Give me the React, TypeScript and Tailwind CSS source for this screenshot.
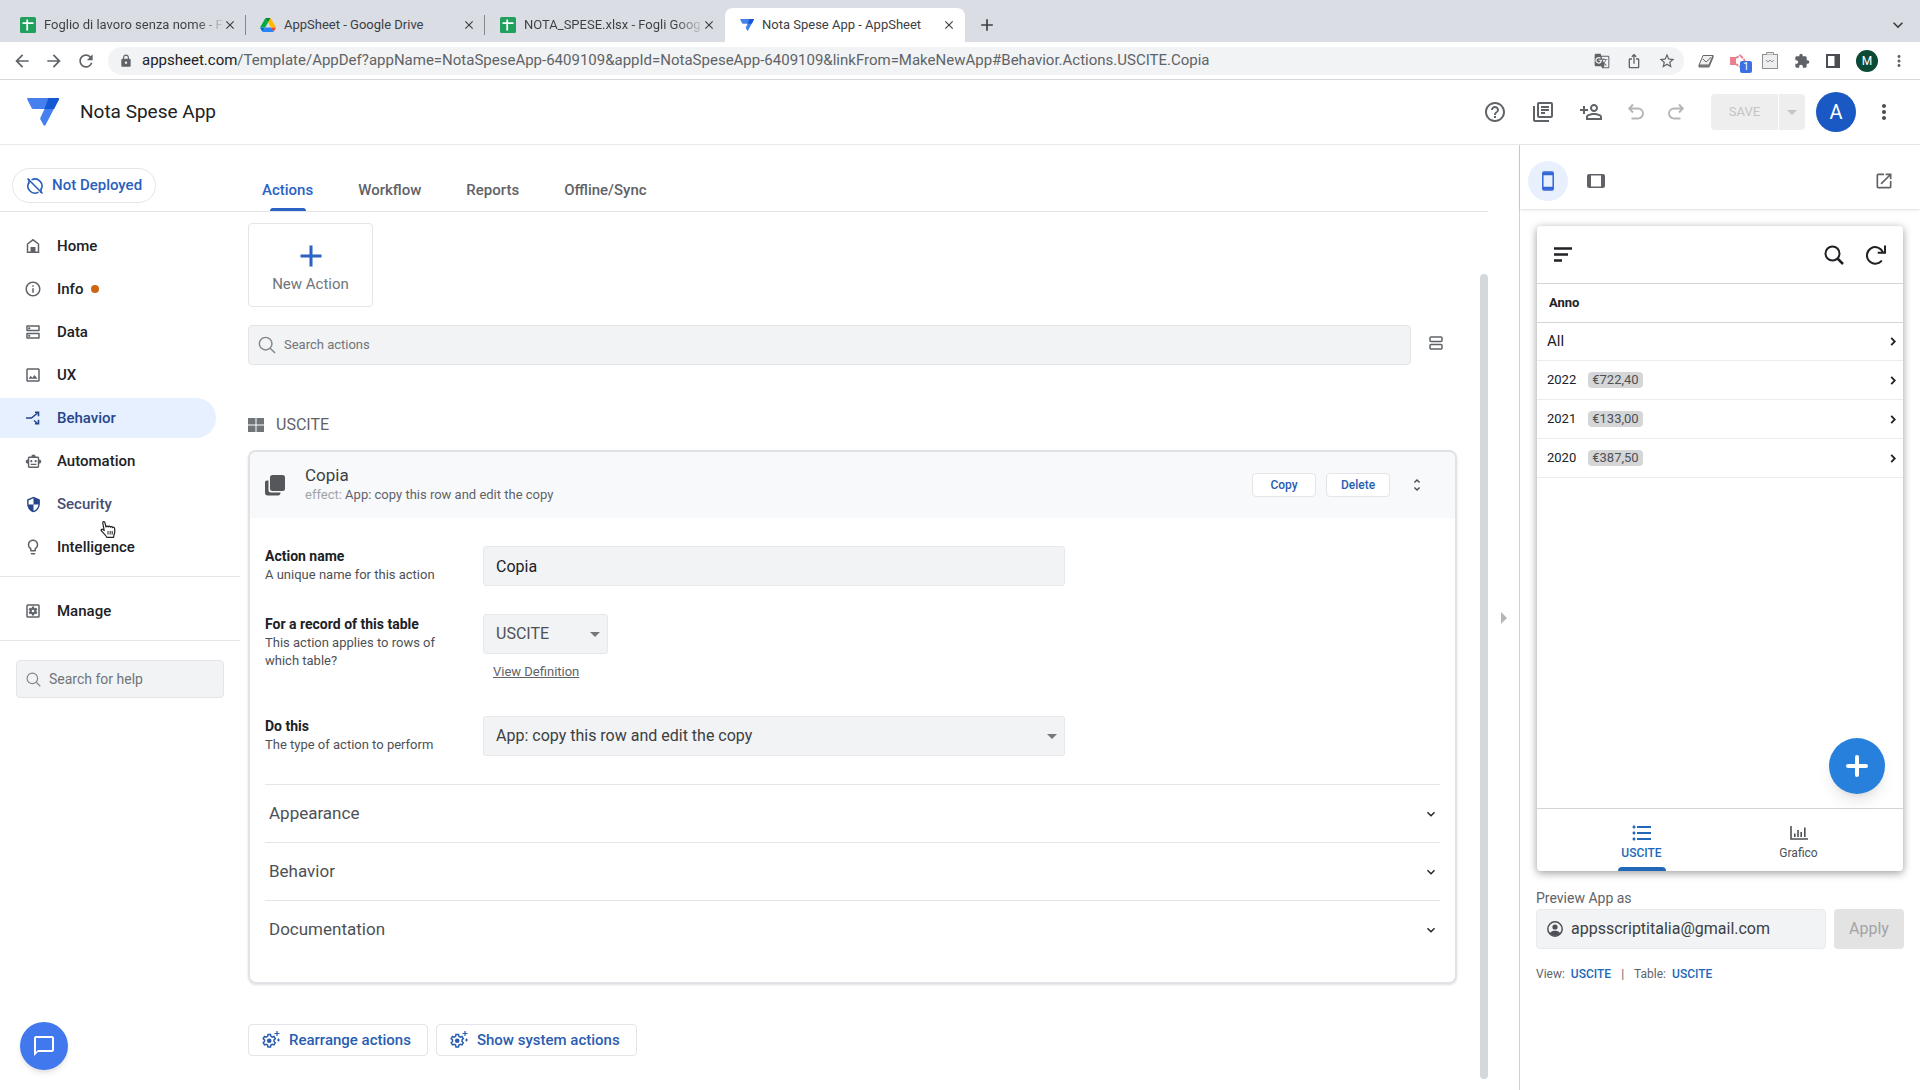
import type { ReactNode } from "react";
import {
  MdAdd,
  MdArrowBack,
  MdArrowForward,
  MdChatBubbleOutline,
  MdClose,
  MdExtension,
  MdFormatListBulleted,
  MdGTranslate,
  MdIosShare,
  MdKeyboardArrowDown,
  MdLock,
  MdMoreVert,
  MdOpenInNew,
  MdOutlineDns,
  MdOutlineHelpOutline,
  MdOutlineImage,
  MdOutlineInfo,
  MdOutlineLibraryBooks,
  MdOutlineLightbulb,
  MdOutlinePersonAddAlt,
  MdOutlineSettingsApplications,
  MdOutlineSmartToy,
  MdRefresh,
  MdSecurity,
  MdStarBorder,
  MdUnfoldMore,
} from "react-icons/md";

function SheetsIcon() {
  return (
    <svg viewBox="0 0 16 16" className="size-4 shrink-0">
      <rect width="16" height="16" rx="1.5" fill="#1fa15d" />
      <path d="M7.2 2.5v11M2.5 6.2h11" stroke="#fff" strokeWidth="1.8" />
    </svg>
  );
}

function DriveIcon() {
  return (
    <svg viewBox="0 0 87 78" className="h-[14px] w-4 shrink-0">
      <path d="M6.6 66.9l3.9 6.6c.8 1.4 2 2.5 3.3 3.3l13.7-23.8H0c0 1.6.4 3.1 1.2 4.5z" fill="#0066da" />
      <path d="M43.7 25L29.9 1.2c-1.3.8-2.5 1.9-3.3 3.3L1.2 48.5C.4 49.9 0 51.5 0 53h27.5z" fill="#00ac47" />
      <path d="M73.5 76.8c1.4-.8 2.5-1.9 3.3-3.3l9.3-16c.8-1.4 1.2-3 1.2-4.5H59.8l5.9 11.5z" fill="#ea4335" />
      <path d="M43.7 25L57.4 1.2C56.1.4 54.5 0 52.9 0H34.4c-1.6 0-3.1.4-4.5 1.2z" fill="#00832d" />
      <path d="M59.8 53H27.5L13.8 76.8c1.3.8 2.9 1.2 4.5 1.2h50.8c1.6 0 3.1-.4 4.5-1.2z" fill="#2684fc" />
      <path d="M73.4 26.5L60.7 4.5c-.8-1.4-1.9-2.5-3.3-3.3L43.7 25l16.1 28h27.5c0-1.6-.4-3.1-1.2-4.5z" fill="#ffba00" />
    </svg>
  );
}

function AppSheetIcon({ className }: { className: string }) {
  return (
    <svg viewBox="0 0 32 28" className={className}>
      <path d="M1 0h30c1 0 1.300.8.9 1.600L18.500 27c-.5 1-1.500 1-2 0l-3-5.500c-.4-.8-.4-1.200 0-2L17.500 11H6.500C5.500 11 5 10.700 4.600 10L.3 1.500C-.1.700.200 0 1 0z" fill="#4580ee" />
      <path d="M21.500 0H31c1 0 1.300.8.9 1.600L27 11h-9.500z" fill="#1458d3" />
    </svg>
  );
}

function HomeIcon() {
  return (
    <svg viewBox="0 0 16 16" className="size-4">
      <path d="M2.500 14.200V6L8 1.800 13.500 6v8.200z" fill="none" stroke="currentColor" strokeWidth="1.500" />
      <path d="M5.500 14V9h5v5z" fill="currentColor" />
    </svg>
  );
}

function BranchIcon() {
  return (
    <svg viewBox="0 0 16 16" className="size-4" fill="none" stroke="currentColor" strokeWidth="1.600">
      <path d="M1 8h5.500l6-5M9 10.500l3.500 3" />
      <path d="M10 2.300h3.500v4M10 13.700h3.500v-4" />
    </svg>
  );
}

function UndoIcon({ className = "" }: { className?: string }) {
  return (
    <svg viewBox="0 0 18 18" className={"size-[18px] " + className} fill="none" stroke="currentColor" strokeWidth="1.900">
      <path d="M6 1.500L2.200 5.500 6 9.500M2.500 5.500h8.500a5 5 0 0 1 0 10H4.500" />
    </svg>
  );
}

function ThinSearch({ className }: { className: string }) {
  return (
    <svg viewBox="0 0 20 20" className={className} fill="none" stroke="currentColor" strokeWidth="1.600">
      <circle cx="8.500" cy="8.500" r="7" />
      <path d="M13.500 13.500l5.500 5.500" />
    </svg>
  );
}

function NotDeployedIcon() {
  return (
    <svg viewBox="0 0 18 18" className="size-[18px]" fill="none" stroke="currentColor" strokeWidth="1.600">
      <path d="M1.500 1.500l15 15" />
      <path d="M5.600 2.900a7 7 0 0 1 9.500 9.500M12.500 15.100a7 7 0 0 1-9.600-9.600" />
      <path d="M3 2v4.500M15 16v-4.500" />
    </svg>
  );
}

function ViewRowsIcon() {
  return (
    <svg viewBox="0 0 14 14" className="size-[14px] text-[#5f6368]" fill="none" stroke="currentColor" strokeWidth="1.500">
      <rect x="1" y="1" width="12" height="4.500" rx="1" />
      <rect x="1" y="8.500" width="12" height="4.500" rx="1" />
    </svg>
  );
}

function CopyIcon() {
  return (
    <svg viewBox="0 0 20 21" className="h-[21px] w-5" fill="#55575b">
      <rect x="5" y="0" width="15" height="16" rx="2.500" />
      <path d="M0 7.500C0 6.300.8 5.500 2 5.500h1.500V15c0 1.700.8 2.500 2.500 2.500h9.500v.5c0 1.500-1 2.500-2.500 2.500H2.500C1 20.500 0 19.500 0 18z" />
    </svg>
  );
}

function GearSparkIcon() {
  return (
    <svg viewBox="0 0 18 18" className="size-[18px]" fill="none" stroke="currentColor">
      <path
        d="M6 3.500h2.500l.4 1.800 1.400.8 1.700-.6 1.300 2.200-1.300 1.200v1.600l1.300 1.200-1.300 2.200-1.700-.6-1.400.8-.4 1.800H6l-.4-1.800-1.400-.8-1.700.6-1.300-2.200 1.300-1.200V8.900L1.200 7.700l1.300-2.200 1.700.6 1.400-.8z"
        strokeWidth="1.500"
      />
      <circle cx="7.200" cy="9.700" r="2.300" fill="currentColor" stroke="none" />
      <path d="M15 0v5M12.500 2.500h5" strokeWidth="1.200" />
      <path d="M16.500 7.500v3M15 9h3" strokeWidth="1" />
    </svg>
  );
}

function BarChartIcon() {
  return (
    <svg viewBox="0 0 18 14" className="h-[14px] w-[18px]" fill="none" stroke="currentColor" strokeWidth="1.600">
      <path d="M1 0v13h17" />
      <path d="M4.800 11V7.500M8 11V4M11.200 11V6M14.800 11V1.500" />
    </svg>
  );
}

function ReloadIcon() {
  return (
    <svg viewBox="0 0 20 20" className="size-5" fill="none" stroke="currentColor" strokeWidth="2">
      <path d="M17 7.500A8.300 8.300 0 1 0 15.800 15.500" />
      <path d="M19 .5v7.300h-7.300" />
    </svg>
  );
}

function MenuIcon() {
  return (
    <svg viewBox="0 0 18 15" className="h-[15px] w-[18px]" stroke="currentColor" strokeWidth="2.400">
      <path d="M0 1.500h18M0 7.500h14M0 13.500h8" />
    </svg>
  );
}

function PhoneIcon() {
  return (
    <svg viewBox="0 0 12 20" className="h-5 w-3" fill="none" stroke="currentColor" strokeWidth="1.500">
      <rect x=".8" y="1" width="10.400" height="18" rx="1.200" />
      <path d="M1 2.700h10M1 17.300h10" strokeWidth="3" />
    </svg>
  );
}

function TabletIcon() {
  return (
    <svg viewBox="0 0 18 14" className="h-[14px] w-[18px]" fill="none" stroke="currentColor" strokeWidth="1.600">
      <rect x=".8" y=".8" width="16.400" height="12.400" rx="1.200" />
      <path d="M2.500 1v12M15.500 1v12" strokeWidth="3" />
    </svg>
  );
}

function AccountIcon() {
  return (
    <svg viewBox="0 0 16 16" className="size-4 shrink-0 text-[#4d5156]" fill="currentColor">
      <circle cx="8" cy="8" r="7.200" fill="none" stroke="currentColor" strokeWidth="1.500" />
      <circle cx="8" cy="6" r="2.600" />
      <path d="M2.800 12.200C4 10.300 6 9.800 8 9.800s4 .5 5.200 2.400A7 7 0 0 1 8 15a7 7 0 0 1-5.200-2.800z" />
    </svg>
  );
}

function HandCursor() {
  return (
    <svg viewBox="0 0 16 17" className="h-[17px] w-4" fill="#fff" stroke="#222" strokeWidth="1.200" strokeLinejoin="round">
      <path d="M4.200 9.500L2.800 2.200C2.500.4 4.600.1 5 1.800l1 4.200c0-1.200 2-1.300 2.200 0 .3-1.200 2-1 2.200.2.400-1 2-.7 2.200.4.500-.8 2-.4 2 .8l.2 3.200c0 1.500-1 2.500-1.200 5.700H6.800c-1.100-2.600-4-4.500-5.500-6.600-.6-1 .6-2 1.600-1.300z" />
      <path d="M8 10v3.500M10.200 10v3.500M12.200 10v3.500" strokeWidth="1" />
    </svg>
  );
}

const browserTabs = [
  { title: "Foglio di lavoro senza nome - F", icon: <SheetsIcon />, active: false },
  { title: "AppSheet - Google Drive", icon: <DriveIcon />, active: false },
  { title: "NOTA_SPESE.xlsx - Fogli Goog", icon: <SheetsIcon />, active: false },
  { title: "Nota Spese App - AppSheet", icon: <AppSheetIcon className="h-3 w-[14px] shrink-0" />, active: true },
];

function BrowserChrome() {
  return (
    <div>
      <div className="flex h-[42px] items-end bg-[#dadde3] pl-[5px]">
        {browserTabs.map((tab, i) => (
          <div
            key={tab.title}
            className={
              "flex h-[34px] w-60 items-center pr-[9px] pl-[15px] " +
              (tab.active ? "rounded-t-lg bg-white" : "")
            }
          >
            {tab.icon}
            <span
              className={
                "ml-2 flex-1 text-[13px] whitespace-nowrap " +
                (tab.active || i === 1
                  ? "text-[#3c4043]"
                  : "bg-linear-to-r from-[#3c4043] from-85% to-[#3c4043]/10 bg-clip-text text-transparent")
              }
            >
              {tab.title}
            </span>
            <button aria-label="Close tab" className="text-[#3c4043]">
              <MdClose size={14} />
            </button>
            {i < 2 && <span className="-mr-[9px] ml-2 h-5 w-px bg-[#84878c]" />}
          </div>
        ))}
        <button aria-label="New tab" className="ml-3 flex h-[34px] items-center text-[#3c4043]">
          <MdAdd size={20} />
        </button>
        <button aria-label="Search tabs" className="mr-3 ml-auto flex h-[34px] items-center text-[#3c4043]">
          <MdKeyboardArrowDown size={20} />
        </button>
      </div>
      <div className="flex h-[38px] items-center border-b border-[#d5d7da] px-3 text-[#5f6368]">
        <div className="flex w-24 items-center gap-3">
          <button aria-label="Back">
            <MdArrowBack size={20} />
          </button>
          <button aria-label="Forward">
            <MdArrowForward size={20} />
          </button>
          <button aria-label="Reload">
            <MdRefresh size={20} />
          </button>
        </div>
        <div className="flex h-7 flex-1 items-center rounded-full bg-[#f1f3f4] pr-2 pl-[11px]">
          <MdLock size={14} />
          <p className="ml-[9px] flex-1 text-[15px] whitespace-nowrap">
            <span className="text-[#202124]">appsheet.com</span>
            /Template/AppDef?appName=NotaSpeseApp-6409109&amp;appId=NotaSpeseApp-6409109&amp;linkFrom=MakeNewApp#Behavior.Actions.USCITE.Copia
          </p>
          <div className="flex items-center gap-4">
            <MdGTranslate size={16} />
            <MdIosShare size={16} />
            <MdStarBorder size={18} />
          </div>
        </div>
        <div className="ml-[14px] flex items-center gap-4">
          <svg viewBox="0 0 16 14" className="h-[14px] w-4" fill="#eee" stroke="#666">
            <path d="M1 11v2h10l4-9.500V1.500z" fill="#888" />
            <path d="M5 1.500h10l-4 9.500H1z" />
            <path d="M5 5l3 3 5-4.500" fill="none" />
          </svg>
          <span className="relative">
            <svg viewBox="0 0 16 16" className="size-4" fill="none" stroke="#ec7f8e" strokeWidth="2">
              <rect x="1" y="5" width="4" height="6" fill="#ec7f8e" />
              <path d="M6 5l5-3M6 11l4 3M11 3l4 5" strokeDasharray="3 1" />
            </svg>
            <span className="absolute top-2 left-[10px] flex h-3 w-3 items-center justify-center rounded-xs bg-[#3c6fe4] text-[10px] leading-none text-white">
              1
            </span>
          </span>
          <svg viewBox="0 0 16 17" className="h-[17px] w-4" fill="#eee" stroke="#8c8f94">
            <rect x=".5" y="2.500" width="15" height="14" />
            <path d="M4.500 2.500v-2h7v2M4 8l2 2 2-2 2 2 2-2" />
          </svg>
          <MdExtension size={16} />
          <svg viewBox="0 0 14 14" className="size-[14px]" fill="none" stroke="#4a4d51" strokeWidth="2">
            <rect x="1" y="1" width="12" height="12" />
            <path d="M10.500 1v12" strokeWidth="4" />
          </svg>
          <span className="flex size-[22px] items-center justify-center rounded-full bg-[#0b4a35] text-xs text-white">
            M
          </span>
          <MdMoreVert size={18} className="-ml-1" />
        </div>
      </div>
    </div>
  );
}

function AppHeader() {
  return (
    <header className="flex h-[65px] items-center border-b border-[#e8eaed] pr-6 pl-[27px] text-[#5f6368]">
      <AppSheetIcon className="h-7 w-8" />
      <h1 className="ml-[21px] flex-1 text-[19px] text-[#202124]">Nota Spese App</h1>
      <div className="flex items-center gap-6">
        <button aria-label="Help">
          <MdOutlineHelpOutline size={24} />
        </button>
        <button aria-label="Library">
          <MdOutlineLibraryBooks size={24} />
        </button>
        <button aria-label="Share" className="-scale-x-100">
          <MdOutlinePersonAddAlt size={24} />
        </button>
        <div className="flex gap-[22px] text-[#b4b6b9]">
          <button aria-label="Undo">
            <UndoIcon />
          </button>
          <button aria-label="Redo">
            <UndoIcon className="-scale-x-100" />
          </button>
        </div>
      </div>
      <div className="ml-[26px] flex h-9 overflow-hidden rounded bg-[#eeeeee] text-[#c4c4c4]">
        <button className="w-[68px] border-r border-white text-[13px]">SAVE</button>
        <button aria-label="Save options" className="flex w-[26px] items-center justify-center">
          <span className="border-x-5 border-t-5 border-x-transparent border-t-current" />
        </button>
      </div>
      <button className="mr-4 ml-[11px] size-10 rounded-full bg-[#1a58c4] text-xl text-white">A</button>
      <button aria-label="More" className="text-[#4a4d51]">
        <MdMoreVert size={24} />
      </button>
    </header>
  );
}

type NavItem = { label: string; icon: ReactNode; tone?: string; dot?: boolean };

const navItems: NavItem[] = [
  { label: "Home", icon: <HomeIcon /> },
  { label: "Info", icon: <MdOutlineInfo size={18} />, dot: true },
  { label: "Data", icon: <MdOutlineDns size={18} /> },
  { label: "UX", icon: <MdOutlineImage size={18} /> },
  { label: "Behavior", icon: <BranchIcon />, tone: "bg-[#e6f0fe] text-[#26468c]" },
  { label: "Automation", icon: <MdOutlineSmartToy size={17} /> },
  { label: "Security", icon: <MdSecurity size={17} />, tone: "text-[#474d75]" },
  { label: "Intelligence", icon: <MdOutlineLightbulb size={18} /> },
];

function NavLink({ item }: { item: NavItem }) {
  return (
    <a
      href={"#" + item.label}
      className={
        "mr-6 flex h-10 items-center rounded-r-full pl-6 text-[15px] font-medium " +
        (item.tone ?? "text-[#202124]")
      }
    >
      <span
        className={
          "flex w-[18px] justify-center " + (item.tone ? "text-[#26468c]" : "text-[#5f6368]")
        }
      >
        {item.icon}
      </span>
      <span className="ml-[15px]">{item.label}</span>
      {item.dot && <span className="ml-2 size-2 rounded-full bg-[#cc6612]" />}
    </a>
  );
}

function Sidebar() {
  return (
    <aside className="flex w-60 shrink-0 flex-col">
      <div className="flex h-[67px] items-end border-b border-[#e3e5e8] pb-2 pl-3">
        <button className="flex h-[35px] items-center gap-2 rounded-full border border-[#e3e5e8] px-[13px] text-[15px] font-medium text-[#2a5fbd]">
          <NotDeployedIcon />
          Not Deployed
        </button>
      </div>
      <div className="relative">
        <nav className="flex flex-col gap-[3px] pt-[14px] pb-[9px]">
          {navItems.map((item) => (
            <NavLink key={item.label} item={item} />
          ))}
        </nav>
        <span className="absolute top-[309px] left-[100px]">
          <HandCursor />
        </span>
      </div>
      <div className="border-y border-[#e3e5e8] pt-[14px] pb-[9px]">
        <NavLink item={{ label: "Manage", icon: <MdOutlineSettingsApplications size={18} /> }} />
      </div>
      <label className="mx-4 mt-[19px] flex h-[38px] items-center gap-2 rounded border border-[#e3e5e8] bg-[#f1f3f4] px-[9px] text-[#80868b]">
        <ThinSearch className="size-[15px] shrink-0" />
        <input
          type="search"
          aria-label="Search for help"
          placeholder="Search for help"
          className="min-w-0 flex-1 text-sm outline-none placeholder:text-[#70757a]"
        />
      </label>
      <button
        aria-label="Chat"
        className="mt-auto mb-5 ml-5 flex size-12 items-center justify-center rounded-full bg-[#4178ee] text-white shadow-md"
      >
        <MdChatBubbleOutline size={24} />
      </button>
    </aside>
  );
}

function Caret() {
  return (
    <span className="pointer-events-none absolute top-[18px] right-2 border-x-5 border-t-5 border-x-transparent border-t-[#777]" />
  );
}

const fieldBox =
  "h-10 w-full appearance-none rounded-[3px] border border-[#e6e8eb] bg-[#f1f3f4] px-3 text-base outline-none";

function FieldRow({ id, label, hint, children }: { id: string; label: string; hint: string; children: ReactNode }) {
  return (
    <div className="flex">
      <div className="w-[218px] shrink-0">
        <label htmlFor={id} className="block text-sm leading-5 font-bold text-[#202124]">
          {label}
        </label>
        <p className="w-[180px] text-[13px] leading-[18px] text-[#4d5156]">{hint}</p>
      </div>
      <div className="max-w-[582px] flex-1">{children}</div>
    </div>
  );
}

function ActionCard() {
  return (
    <section className="mt-[13px] rounded-lg border-2 border-[#e0e2e6] pb-6 shadow">
      <div className="flex h-[66px] items-center rounded-t-md bg-[#f8f9fb] pr-[30px] pl-[15px]">
        <CopyIcon />
        <div className="ml-5 flex-1 pb-1">
          <h3 className="text-[17px] leading-6 text-[#3c4043]">Copia</h3>
          <p className="text-[13px] leading-4 text-[#5f6368]">
            <span className="text-[#a0a4a8]">effect:</span> App: copy this row and edit the copy
          </p>
        </div>
        <div className="flex gap-[10px] text-xs font-medium text-[#2a5db0]">
          <button className="h-6 w-16 rounded-sm border border-[#e3e5e8] bg-white">Copy</button>
          <button className="h-6 w-16 rounded-sm border border-[#e3e5e8] bg-white">Delete</button>
        </div>
        <button aria-label="Collapse action" className="ml-[19px] text-[#4a4d51]">
          <MdUnfoldMore size={16} />
        </button>
      </div>
      <div className="px-[15px] pt-7">
        <FieldRow id="action-name" label="Action name" hint="A unique name for this action">
          <input id="action-name" defaultValue="Copia" className={fieldBox + " text-[#202124]"} />
        </FieldRow>
        <div className="mt-7">
          <FieldRow id="table" label="For a record of this table" hint="This action applies to rows of which table?">
            <div className="relative w-[125px]">
              <select id="table" className={fieldBox + " text-[#4d5156]"}>
                <option>USCITE</option>
              </select>
              <Caret />
            </div>
            <a href="#definition" className="mt-2 ml-[10px] inline-block text-[13px] text-[#5f6368] underline">
              View Definition
            </a>
          </FieldRow>
        </div>
        <div className="mt-[33px]">
          <FieldRow id="do-this" label="Do this" hint="The type of action to perform">
            <div className="relative">
              <select id="do-this" className={fieldBox + " text-[#3c4043]"}>
                <option>App: copy this row and edit the copy</option>
              </select>
              <Caret />
            </div>
          </FieldRow>
        </div>
        <div className="mt-7">
          {["Appearance", "Behavior", "Documentation"].map((name) => (
            <button
              key={name}
              className="flex h-[58px] w-full items-center justify-between border-t border-[#e3e5e8] pr-px pl-1 text-[17px] text-[#4d5156]"
            >
              {name}
              <MdKeyboardArrowDown size={16} className="text-[#202124]" />
            </button>
          ))}
        </div>
      </div>
    </section>
  );
}

function Editor() {
  return (
    <main className="flex min-w-0 flex-1 flex-col">
      <div className="flex h-[67px] gap-px border-b border-[#e3e5e8] text-[15px] font-medium text-[#5f6368]">
        {["Actions", "Workflow", "Reports", "Offline/Sync"].map((tab, i) => (
          <button
            key={tab}
            className={"flex flex-col items-center px-[22px] " + (i === 0 ? "text-[#2a63c4]" : "")}
          >
            <span className="mt-[35px] flex-1 leading-5">{tab}</span>
            {i === 0 && <span className="h-[3px] w-9 rounded-t-full bg-[#2a63c4]" />}
          </button>
        ))}
      </div>
      <div className="flex flex-1">
        <div className="min-w-0 flex-1 pt-[11px] pr-[23px] pl-2">
          <button className="flex h-[84px] w-[125px] flex-col items-center rounded border border-[#e3e5e8] pt-[14px] text-[15px] leading-5 text-[#70757a]">
            <MdAdd size={36} className="text-[#2a63c4]" />
            New Action
          </button>
          <div className="mt-[18px] flex items-center">
            <label className="flex h-10 flex-1 items-center gap-2 rounded border border-[#e3e5e8] bg-[#f1f3f4] px-[9px] text-[#80868b]">
              <ThinSearch className="size-[18px] shrink-0" />
              <input
                type="search"
                aria-label="Search actions"
                placeholder="Search actions"
                className="min-w-0 flex-1 text-[13px] outline-none placeholder:text-[#70757a]"
              />
            </label>
            <button aria-label="Toggle view" className="mr-[14px] ml-[18px] pb-1">
              <ViewRowsIcon />
            </button>
          </div>
          <h2 className="mt-12 flex items-center gap-3 text-base leading-6 text-[#5f6368]">
            <svg viewBox="0 0 16 14" className="h-[14px] w-4" fill="#70757a">
              <path d="M0 0h7.500v6.500H0zM8.500 0H16v6.500H8.500zM0 7.500h7.500V14H0zM8.500 7.500H16V14H8.500z" />
            </svg>
            USCITE
          </h2>
          <ActionCard />
          <div className="mt-10 flex gap-2 text-[15px] font-medium text-[#2a5db0]">
            {["Rearrange actions", "Show system actions"].map((label) => (
              <button
                key={label}
                className="flex h-8 items-center gap-[9px] rounded-sm border border-[#e3e5e8] pr-4 pl-[13px]"
              >
                <GearSparkIcon />
                {label}
              </button>
            ))}
          </div>
        </div>
        <div className="flex w-2 pt-[62px] pb-[11px]">
          <div className="w-full rounded-full bg-[#d5d8db]" />
        </div>
      </div>
    </main>
  );
}

const years = [
  { year: "2022", total: "€722,40" },
  { year: "2021", total: "€133,00" },
  { year: "2020", total: "€387,50" },
];

function Chevron() {
  return (
    <svg viewBox="0 0 6 10" className="ml-auto h-[9px] w-[6px]" fill="none" stroke="currentColor" strokeWidth="2">
      <path d="M1 1l4 4-4 4" />
    </svg>
  );
}

function PhonePreview() {
  return (
    <div className="relative flex h-[645px] flex-col overflow-hidden rounded text-[#202124]">
      <div className="flex h-[58px] items-center border-b border-[#d2d4d7] px-[17px]">
        <button aria-label="Menu">
          <MenuIcon />
        </button>
        <button aria-label="Search" className="mr-[22px] ml-auto">
          <svg viewBox="0 0 20 20" className="size-5" fill="none" stroke="currentColor" strokeWidth="2">
            <circle cx="8.500" cy="8.500" r="7" />
            <path d="M13.500 13.500l5.500 5.500" strokeWidth="2.500" />
          </svg>
        </button>
        <button aria-label="Sync">
          <ReloadIcon />
        </button>
      </div>
      <h4 className="flex h-[39px] items-center border-b border-[#d2d4d7] px-3 text-[13px] font-bold">Anno</h4>
      <ul>
        <li className="border-b border-[#ebecee]">
          <button className="flex h-[37px] w-full items-center pr-[7px] pl-[10px] text-[15px]">
            All
            <Chevron />
          </button>
        </li>
        {years.map((row) => (
          <li key={row.year} className="border-b border-[#ebecee]">
            <button className="flex h-[38px] w-full items-center pr-[7px] pl-[10px] text-[13px]">
              {row.year}
              <span className="ml-3 rounded-sm bg-[#d5d6d8] px-1 leading-4 text-[#4d5156]">{row.total}</span>
              <Chevron />
            </button>
          </li>
        ))}
      </ul>
      <button
        aria-label="Add"
        className="absolute right-[18px] bottom-[77px] flex size-14 items-center justify-center rounded-full bg-[#2780dc] text-white shadow-lg"
      >
        <svg viewBox="0 0 22 22" className="size-[22px]" stroke="currentColor" strokeWidth="4" strokeLinecap="round">
          <path d="M11 2v18M2 11h18" />
        </svg>
      </button>
      <div className="mt-auto flex h-[63px] border-t border-[#d2d4d7] px-[26px] text-xs">
        <button className="flex flex-1 flex-col items-center pt-3 font-medium text-[#2368b8]">
          <MdFormatListBulleted size={24} />
          <span className="flex-1">USCITE</span>
          <span className="h-1 w-12 rounded-t-sm bg-[#2368b8]" />
        </button>
        <button className="flex flex-1 flex-col items-center gap-[5px] pt-[17px] text-[#4d5156]">
          <BarChartIcon />
          Grafico
        </button>
      </div>
    </div>
  );
}

function PreviewPanel() {
  return (
    <aside className="w-[401px] shrink-0 border-l border-[#cfd1d4]">
      <div className="flex h-16 items-center pt-2 pr-[26px] pl-2 text-[#5f6368] shadow">
        <button
          aria-label="Phone view"
          className="flex size-10 items-center justify-center rounded-full bg-[#e8f0fe] text-[#3367d6]"
        >
          <PhoneIcon />
        </button>
        <button aria-label="Tablet view" className="ml-[19px]">
          <TabletIcon />
        </button>
        <button aria-label="Open in new window" className="ml-auto">
          <MdOpenInNew size={20} />
        </button>
      </div>
      <div className="px-4 pt-[17px]">
        <div className="mx-px rounded bg-white shadow-[0_2px_8px_rgba(0,0,0,0.4)]">
          <PhonePreview />
        </div>
        <label htmlFor="preview-as" className="mt-[17px] block text-sm leading-5 text-[#5f6368]">
          Preview App as
        </label>
        <div className="mt-px flex gap-2">
          <div className="flex h-10 flex-1 items-center gap-2 rounded border border-[#e8eaed] bg-[#f1f3f4] px-[10px]">
            <AccountIcon />
            <input
              id="preview-as"
              defaultValue="appsscriptitalia@gmail.com"
              className="min-w-0 flex-1 text-base text-[#3c4043] outline-none"
            />
          </div>
          <button className="h-10 w-[70px] rounded bg-[#e3e3e3] text-base text-[#a2a4a6]">Apply</button>
        </div>
        <p className="mt-[15px] flex gap-[6px] text-xs leading-5 text-[#5f6368]">
          View:
          <a href="#view" className="font-medium text-[#2368b8]">
            USCITE
          </a>
          <span className="mx-1">|</span>
          Table:
          <a href="#table" className="font-medium text-[#2368b8]">
            USCITE
          </a>
        </p>
      </div>
    </aside>
  );
}

export default function App() {
  return (
    <div className="flex min-h-screen flex-col bg-white font-[Roboto,sans-serif]">
      <BrowserChrome />
      <AppHeader />
      <div className="flex flex-1">
        <Sidebar />
        <Editor />
        <button aria-label="Collapse preview" className="flex w-[31px] shrink-0 items-center justify-center">
          <span className="border-y-6 border-l-6 border-y-transparent border-l-[#b4b6b9]" />
        </button>
        <PreviewPanel />
      </div>
    </div>
  );
}
